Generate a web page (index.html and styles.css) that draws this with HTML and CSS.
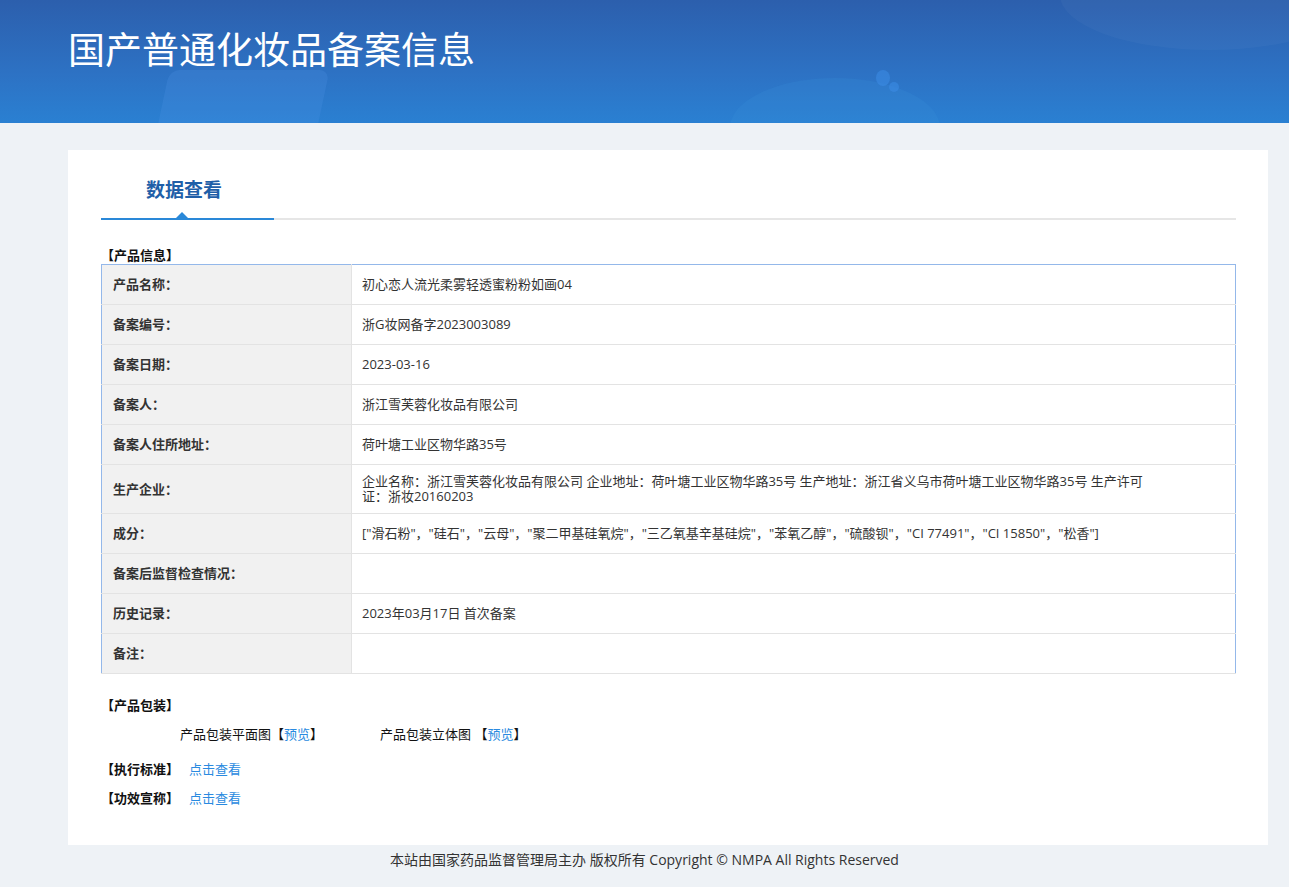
FILE: index.html
```html
<!DOCTYPE html>
<html lang="zh-CN">
<head>
  <meta charset="UTF-8">
  <title>国产普通化妆品备案信息</title>
  <link rel="stylesheet" href="styles.css">
</head>
<body>

<div class="banner">
  <span class="glow glow-a"></span>
  <span class="glow glow-b"></span>
  <span class="glow glow-c"></span>
  <span class="dot dot-a"></span>
  <span class="dot dot-b"></span>
  <h1>国产普通化妆品备案信息</h1>
</div>

<div class="card">
  <div class="tabs">
    <div class="tab active">数据查看</div>
  </div>

  <div class="section-title">【产品信息】</div>
  <table class="info">
    <tr><th>产品名称：</th><td>初心恋人流光柔雾轻透蜜粉粉如画04</td></tr>
    <tr><th>备案编号：</th><td>浙G妆网备字2023003089</td></tr>
    <tr><th>备案日期：</th><td>2023-03-16</td></tr>
    <tr><th>备案人：</th><td>浙江雪芙蓉化妆品有限公司</td></tr>
    <tr><th>备案人住所地址：</th><td>荷叶塘工业区物华路35号</td></tr>
    <tr><th>生产企业：</th><td>企业名称：浙江雪芙蓉化妆品有限公司 企业地址：荷叶塘工业区物华路35号 生产地址：浙江省义乌市荷叶塘工业区物华路35号 生产许可证：浙妆20160203</td></tr>
    <tr><th>成分：</th><td>["滑石粉"，"硅石"，"云母"，"聚二甲基硅氧烷"，"三乙氧基辛基硅烷"，"苯氧乙醇"，"硫酸钡"，"CI 77491"，"CI 15850"，"松香"]</td></tr>
    <tr><th>备案后监督检查情况：</th><td></td></tr>
    <tr><th>历史记录：</th><td>2023年03月17日 首次备案</td></tr>
    <tr><th>备注：</th><td></td></tr>
  </table>

  <div class="section-title pack-title">【产品包装】</div>
  <div class="pack-row">
    <span class="pack-item">产品包装平面图【<a href="#">预览</a>】</span>
    <span class="pack-item">产品包装立体图 【<a href="#">预览</a>】</span>
  </div>

  <div class="link-row"><b>【执行标准】</b><a href="#">点击查看</a></div>
  <div class="link-row"><b>【功效宣称】</b><a href="#">点击查看</a></div>
</div>

<div class="footer">本站由国家药品监督管理局主办 版权所有 Copyright © NMPA All Rights Reserved</div>

</body>
</html>
```

FILE: styles.css
```css
body {
  margin: 0;
  background: #eef2f6;
  color: #333;
  font-family: "Open Sans", "Noto Sans CJK SC", sans-serif;
  font-size: 13px;
  text-spacing-trim: space-all;
}

a { color: #2a8ae0; text-decoration: none; }

.banner {
  position: relative;
  overflow: hidden;
  height: 123px;
  padding-left: 68px;
  background: linear-gradient(180deg, #2c5fad 0%, #2d72c4 60%, #2a80d2 100%);
}

.banner h1 {
  position: relative;
  margin: 0;
  padding-top: 25px;
  color: #fff;
  font-family: "Noto Sans CJK SC", sans-serif;
  font-size: 37px;
  font-weight: normal;
  line-height: 46px;
}

.glow {
  position: absolute;
  border-radius: 50%;
}
.glow-a { left: 160px; top: 70px; width: 160px; height: 90px; background: rgba(80,150,230,0.22); border-radius: 10px; transform: skewX(-12deg); }
.glow-b { left: 730px; top: 78px; width: 210px; height: 100px; background: rgba(60,150,220,0.18); }
.glow-c { left: 1060px; top: -60px; width: 300px; height: 110px; background: rgba(255,255,255,0.03); }
.dot { position: absolute; border-radius: 50%; background: rgba(60,140,230,0.55); }
.dot-a { left: 876px; top: 70px; width: 14px; height: 16px; }
.dot-b { left: 889px; top: 82px; width: 10px; height: 10px; }

.card {
  margin: 27px 21px 0 68px;
  padding: 0 32px 38px 33px;
  background: #fff;
}

.tabs {
  border-bottom: 2px solid #e6e6e6;
  padding-top: 24px;
}

.tab {
  position: relative;
  width: 173px;
  margin-bottom: -2px;
  padding-bottom: 14px;
  box-sizing: border-box;
  padding-left: 45px;
  color: #1f5fa8;
  font-family: "Noto Sans CJK SC", sans-serif;
  font-size: 19px;
  font-weight: bold;
  line-height: 30px;
  border-bottom: 2px solid #2a88d8;
}

.tab::after {
  content: "";
  position: absolute;
  left: 75px;
  bottom: 0;
  border: 6px solid transparent;
  border-bottom: 6px solid #2a88d8;
  border-top: 0;
}

.section-title {
  margin-top: 27px;
  color: #111;
  font-weight: bold;
  line-height: 17px;
}

.info {
  width: 100%;
  border-collapse: collapse;
  border: 1px solid #94b8ea;
}

.info tr { border-bottom: 1px solid #e3e3e3; }

.info th, .info td {
  height: 21px;
  padding: 9px 10px;
  line-height: 15px;
  text-align: left;
  vertical-align: middle;
}

.info th {
  width: 228px;
  padding-left: 11px;
  background: #f1f1f1;
  color: #333;
  border-right: 1px solid #e3e3e3;
}

.info td {
  padding-right: 70px;
  color: #333;
}

.pack-title { margin-top: 23px; }

.pack-row {
  display: flex;
  padding-left: 79px;
  margin-top: 12px;
  color: #111;
  line-height: 17px;
}

.pack-item { width: 200px; }

.link-row {
  margin-top: 12px;
  color: #111;
  line-height: 17px;
}

.pack-row + .link-row { margin-top: 18px; }

.link-row a { margin-left: 10px; }

.footer {
  padding: 6px 0 15px;
  text-align: center;
  color: #333;
  font-size: 14px;
  line-height: 17px;
}
```
